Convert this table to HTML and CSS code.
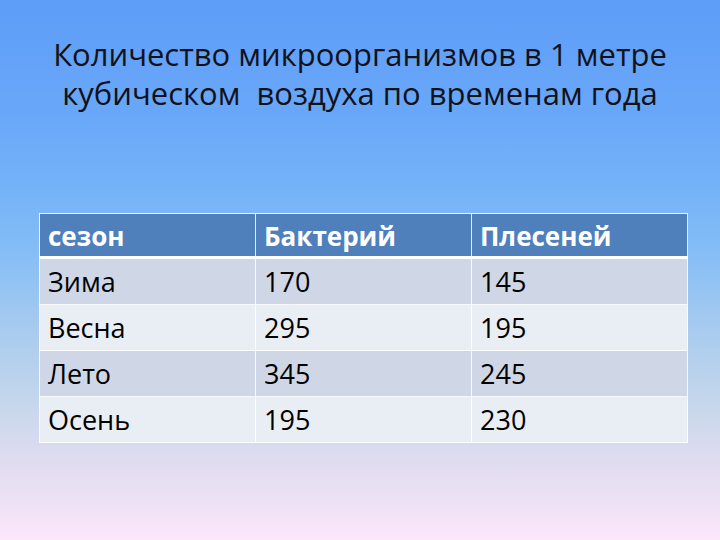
FILE: index.html
```html
<!DOCTYPE html>
<html lang="ru">
<head>
<meta charset="utf-8">
<title>Количество микроорганизмов</title>
<link rel="stylesheet" href="styles.css">
</head>
<body>
<div class="slide">
  <h1 class="title">Количество микроорганизмов в 1 метре<br>кубическом&nbsp; воздуха по временам года</h1>
  <table class="data">
    <thead>
      <tr><th>сезон</th><th>Бактерий</th><th>Плесеней</th></tr>
    </thead>
    <tbody>
      <tr class="odd"><td>Зима</td><td>170</td><td>145</td></tr>
      <tr class="even"><td>Весна</td><td>295</td><td>195</td></tr>
      <tr class="odd"><td>Лето</td><td>345</td><td>245</td></tr>
      <tr class="even"><td>Осень</td><td>195</td><td>230</td></tr>
    </tbody>
  </table>
</div>
</body>
</html>
```

FILE: styles.css
```css
html, body {
  margin: 0;
  padding: 0;
}
.slide {
  width: 720px;
  height: 540px;
  overflow: hidden;
  display: flex;
  flex-direction: column;
  background: linear-gradient(to bottom,
    #5e9df8 0px,
    #68a7f8 110px,
    #75b3f8 190px,
    #84bdf6 250px,
    #a8cbef 330px,
    #c4d6ec 400px,
    #dfdcf0 460px,
    #fce6fa 540px);
  font-family: "Open Sans", "Noto Sans", sans-serif;
}
.title {
  margin: 0;
  padding-top: 35px;
  font-weight: normal;
  font-size: 31px;
  line-height: 39px;
  text-align: center;
  color: #121218;
}
.data {
  margin-top: 100px;
  margin-left: 39px;
  width: 649px;
  border-collapse: collapse;
  table-layout: fixed;
  font-size: 27px;
}
.data th, .data td {
  text-align: left;
  padding: 0 0 0 8px;
  border: 1px solid rgba(255, 255, 255, 0.85);
}
.data th {
  height: 44px;
  padding-top: 2px;
  box-sizing: border-box;
  background: #4f80bc;
  color: #ffffff;
  font-size: 26px;
  font-weight: bold;
  border-bottom: 3px solid #ffffff;
}
.data td {
  height: 45px;
  color: #000000;
}
.odd td {
  background: #cfd7e6;
}
.even td {
  background: #e9edf4;
}
```
